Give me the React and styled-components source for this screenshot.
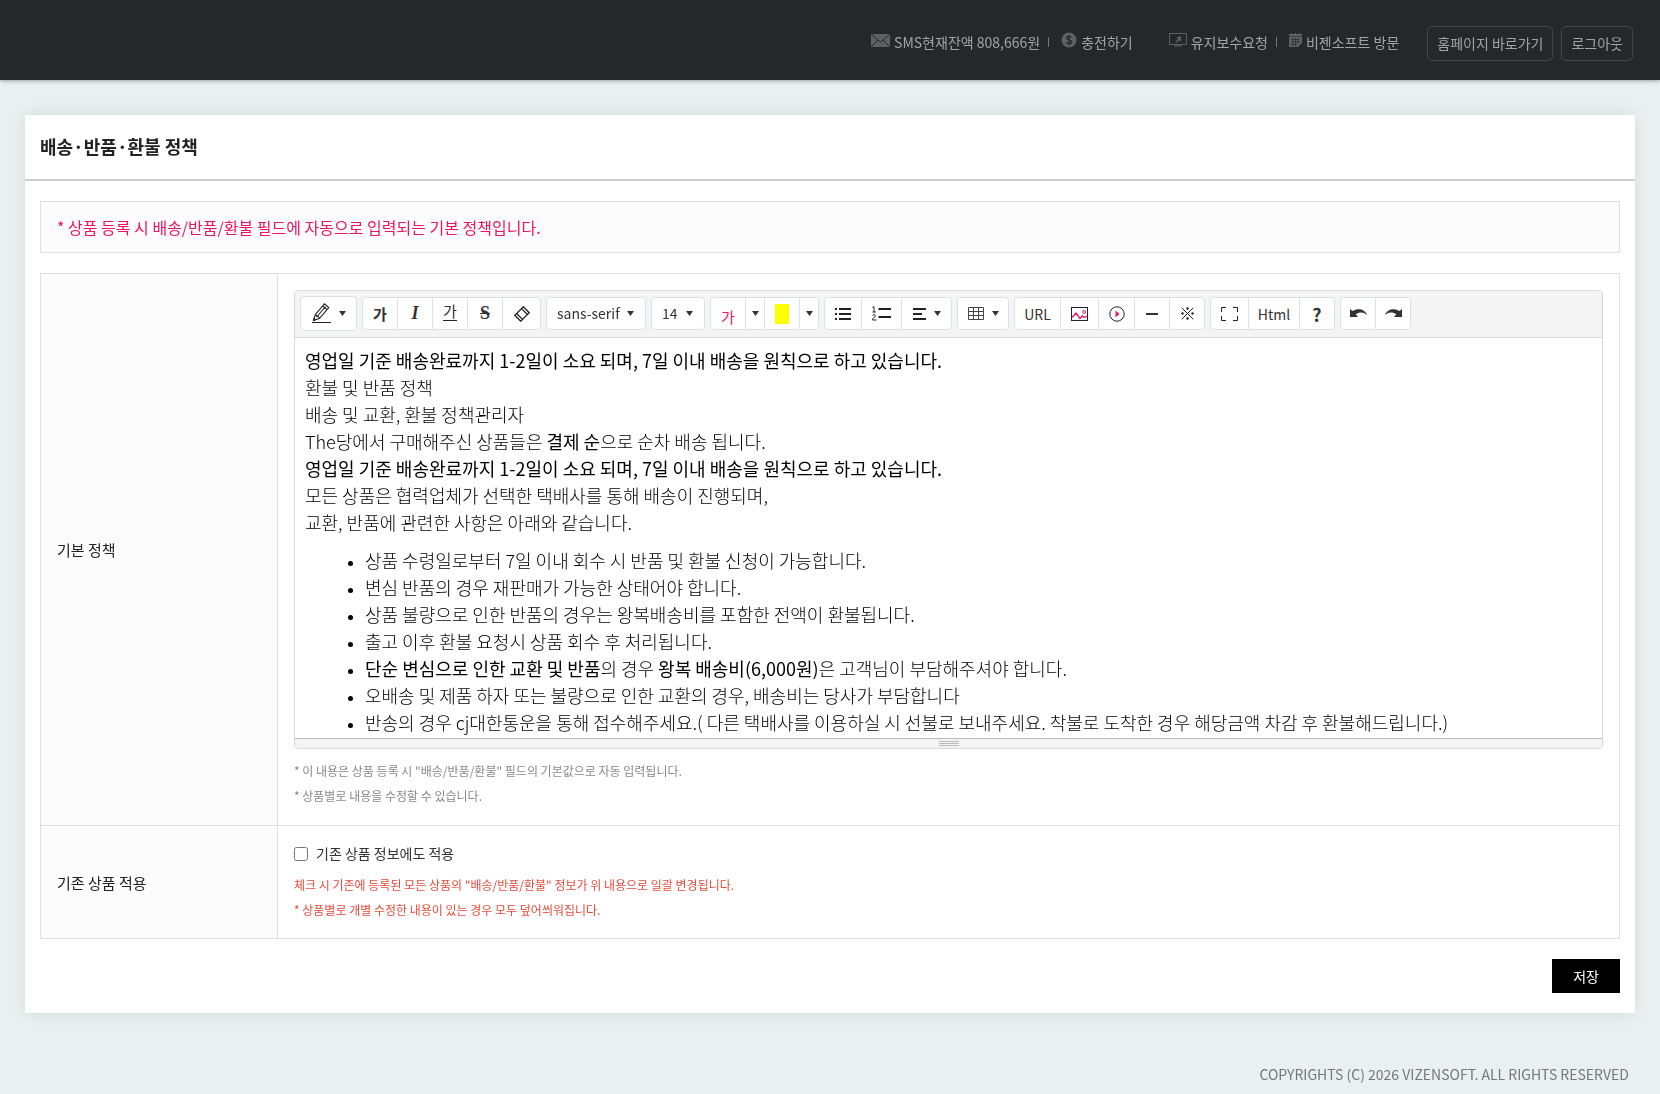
import React from "react"
import styled, { createGlobalStyle, css } from "styled-components"

const colors = {
  dark: "#25282b",
  page: "#eaf0f0",
  line: "#dfdfdf",
  btnLine: "#dae0e9",
  pink: "#ee1560",
  red: "#e74c3c",
  text: "#222",
}

const GlobalStyle = createGlobalStyle`
  * {
    box-sizing: border-box;
  }

  body {
    margin: 0;
    background-color: ${colors.page};
    color: ${colors.text};
    font-family: "Noto Sans CJK KR", "Noto Sans", sans-serif;
    font-size: 14px;
  }

  button,
  input,
  select {
    font-family: inherit;
  }
`

const Header = styled.header`
  display: flex;
  align-items: center;
  justify-content: flex-end;
  height: 80px;
  padding: 0 27px;
  background-color: ${colors.dark};
  box-shadow: 0 1px 4px rgba(0, 0, 0, 0.35);
`

const LinkGroup = styled.nav`
  display: flex;
  align-items: center;
  padding-top: 4px;
  margin-right: 20px;

  & + & {
    margin-left: 16px;
  }
`

const HeaderLink = styled.a`
  display: flex;
  align-items: center;
  gap: 4px;
  color: #a3a3a3;
  font-size: 14px;
  line-height: 20px;
  text-decoration: none;

  svg {
    margin-bottom: 4px;
  }

  & + & {
    margin-left: 8px;

    &::before {
      content: "";
      width: 1px;
      height: 10px;
      margin-right: 8px;
      background-color: #777;
    }
  }
`

const HeaderButton = styled.button`
  height: 35px;
  margin: 6px 0 0 8px;
  padding: 0 9px;
  border: 1px solid #43474a;
  border-radius: 5px;
  background: none;
  color: #a3a3a3;
  font-size: 14px;
`

const Panel = styled.main`
  margin: 35px 25px 0;
  padding-bottom: 20px;
  background-color: #fff;
  box-shadow: 0 0 14px rgba(0, 40, 40, 0.1);
`

const PanelTitle = styled.h1`
  margin: 0;
  padding: 17px 15px 19px;
  border-bottom: 2px solid #ccc;
  font-size: 18px;
  font-weight: 700;
  line-height: 28px;
`

const PanelBody = styled.div`
  padding: 20px 15px 0;
`

const Notice = styled.p`
  margin: 0 0 20px;
  padding: 12px 16px;
  border: 1px solid ${colors.line};
  background-color: #fcfcfc;
  color: ${colors.pink};
  font-size: 16px;
  line-height: 26px;
`

const FormTable = styled.table`
  width: 100%;
  border-collapse: collapse;

  th,
  td {
    border: 1px solid ${colors.line};
    text-align: left;
  }

  th {
    width: 237px;
    padding: 0 16px;
    background-color: #fcfcfc;
    font-size: 15px;
    font-weight: 400;
  }

  td {
    padding: 16px;
  }
`

const Help = styled.p`
  margin: 0;
  color: ${({ $warn }) => ($warn ? colors.red : "#888")};
  font-size: 12px;
  line-height: 25px;
`

const HelpList = styled.div`
  padding: 9px 0 1px;
`

const CheckLabel = styled.label`
  display: flex;
  align-items: center;
  gap: 8px;
  margin-bottom: 8px;
  color: #333;
  font-size: 14px;
  line-height: 22px;

  input {
    width: 14px;
    height: 14px;
    margin: 2px 0 0;
  }
`

const Actions = styled.div`
  display: flex;
  justify-content: flex-end;
  padding-top: 20px;
`

const SaveButton = styled.button`
  height: 34px;
  padding: 0 21px;
  border: 0;
  background-color: #000;
  color: #fff;
  font-size: 14px;
`

const Footer = styled.footer`
  padding: 50px 31px 7px;
  color: #777;
  font-size: 14px;
  line-height: 22px;
  text-align: right;
`

const Editor = styled.div`
  overflow: hidden;
  border: 1px solid #d9d9d9;
  border-radius: 4px;
`

const Toolbar = styled.div`
  display: flex;
  flex-wrap: wrap;
  align-items: center;
  gap: 5px;
  padding: 5px 5px 6px;
  border-bottom: 1px solid #d9d9d9;
  background-color: #f4f4f4;
`

const BtnGroup = styled.div`
  display: flex;
  height: ${({ $tall }) => ($tall ? 35 : 33)}px;
`

const control = css`
  border: 1px solid ${colors.btnLine};
  background-color: #fff;
  color: #333;
`

const ToolButton = styled.button`
  ${control};
  display: flex;
  align-items: center;
  justify-content: center;
  gap: 8px;
  width: ${({ $w }) => $w || 36}px;
  padding: 0;
  font-size: ${({ $size }) => $size || 14}px;
  font-weight: ${({ $bold }) => ($bold ? 700 : 400)};

  & + & {
    margin-left: -1px;
  }

  &:first-child {
    border-top-left-radius: 4px;
    border-bottom-left-radius: 4px;
  }

  &:last-child {
    border-top-right-radius: 4px;
    border-bottom-right-radius: 4px;
  }
`

const SerifMark = styled.span`
  font-family: "Liberation Serif", serif;
  font-size: 18px;
  font-weight: 700;
  font-style: ${({ $italic }) => ($italic ? "italic" : "normal")};
  text-decoration: ${({ $strike }) => ($strike ? "line-through" : "none")};
`

const UnderMark = styled.span`
  margin-bottom: 4px;
  border-bottom: 1px solid #222;
  font-size: 15px;
  line-height: 18px;
`

const ColorMark = styled.span`
  padding-top: 6px;
  color: ${colors.pink};
  font-size: 15px;
`

const Swatch = styled.span`
  width: 14px;
  height: 20px;
  background-color: #ff0;
`

const SelectBox = styled.span`
  display: grid;
  align-items: center;
  width: ${({ $w }) => $w}px;

  select,
  svg {
    grid-area: 1 / 1;
  }

  select {
    ${control};
    width: 100%;
    height: 33px;
    padding: 0 10px 2px;
    border-radius: 4px;
    appearance: none;
    font-size: 14px;
  }

  svg {
    justify-self: end;
    margin-right: 12px;
    pointer-events: none;
  }
`

const EditArea = styled.div`
  height: 400px;
  padding: 9px 10px;
  overflow-y: auto;
  scrollbar-width: none;
  background-color: #fff;
  color: #000;
  font-size: 18px;
  font-weight: 300;
  line-height: 27px;
  outline: none;

  p {
    margin: 0;
  }

  strong {
    font-weight: 400;
  }

  ul {
    margin: 11px 0;
    padding-left: 60px;
  }

  li::marker {
    font-family: "Liberation Sans", sans-serif;
  }
`

const ResizeBar = styled.div`
  display: flex;
  flex-direction: column;
  align-items: center;
  gap: 1px;
  height: 10px;
  padding-top: 2px;
  border-top: 1px solid #bbb;
  background-color: #f4f4f4;

  span {
    width: 20px;
    height: 1px;
    background-color: #bbb;
  }
`

const Icon = ({ w, h = w, children }) => (
  <svg
    width={w}
    height={h}
    viewBox={`0 0 ${w} ${h}`}
    fill="none"
    stroke="#222"
    aria-hidden="true"
  >
    {children}
  </svg>
)

const Caret = () => (
  <Icon w={7} h={5}>
    <path d="M0 0h7L3.5 5z" fill="#333" stroke="none" />
  </Icon>
)

const MailIcon = () => (
  <Icon w={19} h={13}>
    <rect width="19" height="13" rx="1" fill="#5d6164" stroke="none" />
    <path d="M.5.5l9 7.500 9-7.500M.5 12.500l6.500-6.500M18.500 12.500L12 6" stroke={colors.dark} />
  </Icon>
)

const CoinIcon = () => (
  <Icon w={16}>
    <circle cx="8" cy="8" r="7.500" fill="#5d6164" stroke="none" />
    <path
      d="M10.500 5.500C10 4.500 9 4.300 8 4.300c-1.500 0-2.500.700-2.500 1.800 0 2.500 5.200 1.200 5.200 3.700 0 1.200-1.200 1.900-2.700 1.900-1.300 0-2.300-.400-2.800-1.400M8 3v10"
      stroke={colors.dark}
      strokeWidth="1.300"
    />
  </Icon>
)

const MonitorIcon = () => (
  <Icon w={18} h={14}>
    <path d="M.5.5h17v11H.5z" stroke="#5d6164" />
    <path d="M12 3v5.500l-1.500-1.300-3.500 2.800-.700-.700 2.800-3.300L7.500 4.500zM5 12.500h8v1H5z" fill="#5d6164" stroke="none" />
  </Icon>
)

const MemoIcon = () => (
  <Icon w={13} h={14}>
    <path d="M0 1h2V0h1v1h3V0h1v1h3V0h1v1h2v9l-4 4H0z" fill="#5d6164" stroke="none" />
    <path d="M0 3.500h13M2 6.500h9M2 9h9M2 11.500h6M4 5v8M6.500 5v8M9 5v6" stroke={colors.dark} strokeWidth=".6" />
  </Icon>
)

const PencilIcon = () => (
  <Icon w={19} h={21}>
    <path d="M0 19.500h19" />
    <path
      d="M1.500 17.500l1.800-6L12.500.8l4.300 3.700-9.200 10.800zM3.300 11.500c1.800.200 1.600 1.800 1.500 2 1.500-.2 2.500.3 2.800 1.800M10.700 3l4.200 3.600M5.500 13l8-9.500"
      strokeWidth="1.100"
    />
    <path d="M1.500 17.500l.7-2.300 1.400 1.500z" fill="#222" />
  </Icon>
)

const EraserIcon = () => (
  <Icon w={16}>
    <path
      d="M9.300.8l5.900 5.900-8.500 8.500L.8 9.300zM7.500 2.600l5.900 5.900M2.600 7.500l5.900 5.900"
      strokeWidth="1.300"
    />
  </Icon>
)

const BulletIcon = () => (
  <Icon w={16} h={12}>
    <path d="M0 1h2M0 6h2M0 11h2M4 1h12M4 6h12M4 11h12" strokeWidth="2" />
  </Icon>
)

const NumberIcon = () => (
  <Icon w={19} h={15}>
    <path d="M6.500 3H19M6.500 11H19" strokeWidth="2" />
    <path d="M.5 1.500L2 .6V6M.5 6h3.500M.5 9.500c.5-1.200 3-1 3 .3 0 1.200-3 2.200-3 4.200h4" />
  </Icon>
)

const AlignIcon = () => (
  <Icon w={13} h={12}>
    <path d="M0 1h13M0 6h9M0 11h13" strokeWidth="2" />
  </Icon>
)

const TableIcon = () => (
  <Icon w={16} h={13}>
    <path d="M.5.5h15v12H.5zM.5 4.500h15M.5 8.500h15M5.500.5v12M10.500.5v12" stroke="#444" />
  </Icon>
)

const ImageIcon = () => (
  <Icon w={17} h={14}>
    <rect x=".5" y=".5" width="16" height="13" />
    <path d="M1 10.500l4-4.500 4 5.500 2.500-2.500 2 1.500L16 9" stroke={colors.pink} strokeWidth="1.400" />
    <circle cx="13.200" cy="5" r="1.500" stroke={colors.pink} />
  </Icon>
)

const VideoIcon = () => (
  <Icon w={16}>
    <circle cx="8" cy="8" r="7.200" />
    <path d="M6.500 4.500v7L10.500 8z" fill={colors.pink} stroke="none" />
  </Icon>
)

const RuleIcon = () => (
  <Icon w={12} h={2}>
    <path d="M0 1h12" stroke="#333" strokeWidth="2" />
  </Icon>
)

const SpecialIcon = () => (
  <Icon w={13}>
    <path d="M.7.7l11.600 11.600M12.300.7L.7 12.300" />
    <g fill="#222" stroke="none">
      <circle cx="6.500" cy="1.500" r="1.200" />
      <circle cx="6.500" cy="11.500" r="1.200" />
      <circle cx="1.500" cy="6.500" r="1.200" />
      <circle cx="11.500" cy="6.500" r="1.200" />
    </g>
  </Icon>
)

const FullIcon = () => (
  <Icon w={17} h={14}>
    <path d="M5 .5H.5V5M12 .5h4.500V5M5 13.500H.5V9M12 13.500h4.500V9" />
  </Icon>
)

const UndoIcon = () => (
  <Icon w={17} h={9}>
    <path d="M0 0l2.500 2C8-1.200 15 .2 17 6 13.500 2.800 9.500 2.800 5.800 5.300L8 8H0z" fill="#333" stroke="none" />
  </Icon>
)

const RedoIcon = () => (
  <Icon w={17} h={9}>
    <path d="M17 0l-2.500 2C9-1.200 2 .2 0 6 3.500 2.800 7.500 2.800 11.200 5.300L9 8h8z" fill="#333" stroke="none" />
  </Icon>
)

const EditorToolbar = () => (
  <Toolbar role="toolbar" aria-label="편집 도구">
    <BtnGroup $tall>
      <ToolButton type="button" aria-label="스타일" $w={57}>
        <PencilIcon />
        <Caret />
      </ToolButton>
    </BtnGroup>
    <BtnGroup>
      <ToolButton type="button" $bold $size={15}>가</ToolButton>
      <ToolButton type="button"><SerifMark $italic>I</SerifMark></ToolButton>
      <ToolButton type="button"><UnderMark>가</UnderMark></ToolButton>
      <ToolButton type="button"><SerifMark $strike>S</SerifMark></ToolButton>
      <ToolButton type="button" aria-label="서식 지우기" $w={39}><EraserIcon /></ToolButton>
    </BtnGroup>
    <SelectBox $w={100}>
      <select aria-label="글꼴" defaultValue="sans-serif">
        <option>sans-serif</option>
      </select>
      <Caret />
    </SelectBox>
    <SelectBox $w={54}>
      <select aria-label="글자 크기" defaultValue="14">
        <option>14</option>
      </select>
      <Caret />
    </SelectBox>
    <BtnGroup>
      <ToolButton type="button"><ColorMark>가</ColorMark></ToolButton>
      <ToolButton type="button" aria-label="글자색 선택" $w={20}><Caret /></ToolButton>
      <ToolButton type="button" aria-label="배경색"><Swatch /></ToolButton>
      <ToolButton type="button" aria-label="배경색 선택" $w={20}><Caret /></ToolButton>
    </BtnGroup>
    <BtnGroup>
      <ToolButton type="button" aria-label="글머리 기호" $w={38}><BulletIcon /></ToolButton>
      <ToolButton type="button" aria-label="번호 매기기" $w={41}><NumberIcon /></ToolButton>
      <ToolButton type="button" aria-label="문단 정렬" $w={51}>
        <AlignIcon />
        <Caret />
      </ToolButton>
    </BtnGroup>
    <BtnGroup>
      <ToolButton type="button" aria-label="표" $w={52}>
        <TableIcon />
        <Caret />
      </ToolButton>
    </BtnGroup>
    <BtnGroup>
      <ToolButton type="button" $w={47}>URL</ToolButton>
      <ToolButton type="button" aria-label="사진" $w={39}><ImageIcon /></ToolButton>
      <ToolButton type="button" aria-label="동영상" $w={37}><VideoIcon /></ToolButton>
      <ToolButton type="button" aria-label="구분선"><RuleIcon /></ToolButton>
      <ToolButton type="button" aria-label="특수문자"><SpecialIcon /></ToolButton>
    </BtnGroup>
    <BtnGroup>
      <ToolButton type="button" aria-label="전체 화면" $w={39}><FullIcon /></ToolButton>
      <ToolButton type="button" $w={52}>Html</ToolButton>
      <ToolButton type="button" $bold $size={18}>?</ToolButton>
    </BtnGroup>
    <BtnGroup>
      <ToolButton type="button" aria-label="실행 취소"><UndoIcon /></ToolButton>
      <ToolButton type="button" aria-label="다시 실행"><RedoIcon /></ToolButton>
    </BtnGroup>
  </Toolbar>
)

const PolicyContent = () => (
  <EditArea
    contentEditable
    suppressContentEditableWarning
    role="textbox"
    aria-label="기본 정책"
    spellCheck={false}
  >
    <p><strong>영업일 기준 배송완료까지 1-2일이 소요 되며, 7일 이내 배송을 원칙으로 하고 있습니다.</strong></p>
    <p>환불 및 반품 정책</p>
    <p>배송 및 교환, 환불 정책관리자</p>
    <p>The당에서 구매해주신 상품들은 <strong>결제 순</strong>으로 순차 배송 됩니다.</p>
    <p><strong>영업일 기준 배송완료까지 1-2일이 소요 되며, 7일 이내 배송을 원칙으로 하고 있습니다.</strong></p>
    <p>모든 상품은 협력업체가 선택한 택배사를 통해 배송이 진행되며,</p>
    <p>교환, 반품에 관련한 사항은 아래와 같습니다.</p>
    <ul>
      <li>상품 수령일로부터 7일 이내 회수 시 반품 및 환불 신청이 가능합니다.</li>
      <li>변심 반품의 경우 재판매가 가능한 상태어야 합니다.</li>
      <li>상품 불량으로 인한 반품의 경우는 왕복배송비를 포함한 전액이 환불됩니다.</li>
      <li>출고 이후 환불 요청시 상품 회수 후 처리됩니다.</li>
      <li>
        <strong>단순 변심으로 인한 교환 및 반품</strong>의 경우 <strong>왕복 배송비(6,000원)</strong>은 고객님이 부담해주셔야 합니다.
      </li>
      <li>오배송 및 제품 하자 또는 불량으로 인한 교환의 경우, 배송비는 당사가 부담합니다</li>
      <li>
        반송의 경우 cj대한통운을 통해 접수해주세요.( 다른 택배사를 이용하실 시 선불로 보내주세요. 착불로 도착한 경우 해당금액 차감 후 환불해드립니다.)
      </li>
    </ul>
  </EditArea>
)

const App = () => (
  <>
    <GlobalStyle />
    <Header>
      <LinkGroup>
        <HeaderLink href="#sms"><MailIcon />SMS현재잔액 808,666원</HeaderLink>
        <HeaderLink href="#charge"><CoinIcon />충전하기</HeaderLink>
      </LinkGroup>
      <LinkGroup>
        <HeaderLink href="#support"><MonitorIcon />유지보수요청</HeaderLink>
        <HeaderLink href="#vizensoft"><MemoIcon />비젠소프트 방문</HeaderLink>
      </LinkGroup>
      <HeaderButton type="button">홈페이지 바로가기</HeaderButton>
      <HeaderButton type="button">로그아웃</HeaderButton>
    </Header>
    <Panel>
      <PanelTitle>배송·반품·환불 정책</PanelTitle>
      <PanelBody>
        <Notice>* 상품 등록 시 배송/반품/환불 필드에 자동으로 입력되는 기본 정책입니다.</Notice>
        <FormTable>
          <tbody>
            <tr>
              <th scope="row">기본 정책</th>
              <td>
                <Editor>
                  <EditorToolbar />
                  <PolicyContent />
                  <ResizeBar>
                    <span />
                    <span />
                    <span />
                  </ResizeBar>
                </Editor>
                <HelpList>
                  <Help>* 이 내용은 상품 등록 시 "배송/반품/환불" 필드의 기본값으로 자동 입력됩니다.</Help>
                  <Help>* 상품별로 내용을 수정할 수 있습니다.</Help>
                </HelpList>
              </td>
            </tr>
            <tr>
              <th scope="row">기존 상품 적용</th>
              <td>
                <CheckLabel>
                  <input type="checkbox" />
                  기존 상품 정보에도 적용
                </CheckLabel>
                <Help $warn>체크 시 기존에 등록된 모든 상품의 "배송/반품/환불" 정보가 위 내용으로 일괄 변경됩니다.</Help>
                <Help $warn>* 상품별로 개별 수정한 내용이 있는 경우 모두 덮어씌워집니다.</Help>
              </td>
            </tr>
          </tbody>
        </FormTable>
        <Actions>
          <SaveButton type="button">저장</SaveButton>
        </Actions>
      </PanelBody>
    </Panel>
    <Footer>COPYRIGHTS (C) 2026 VIZENSOFT. ALL RIGHTS RESERVED</Footer>
  </>
)

export default App
